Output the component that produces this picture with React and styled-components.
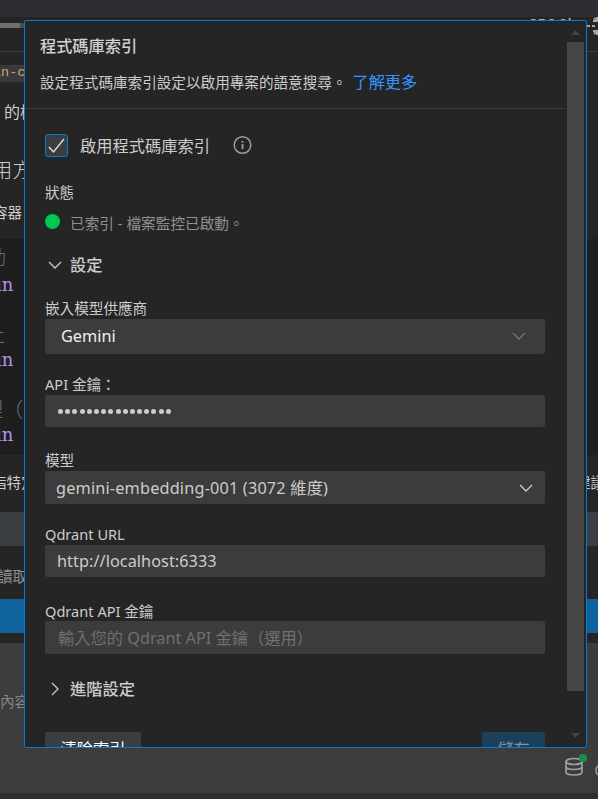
import React from "react";
import styled, { createGlobalStyle } from "styled-components";

const GlobalStyle = createGlobalStyle`
  * { box-sizing: border-box; }
  body { margin: 0; background: #252526; overflow: hidden; }
`;

const sans = `"Noto Sans", "Noto Sans CJK TC", sans-serif`;
const mono = `"DejaVu Sans Mono", "Noto Sans CJK TC", monospace`;

const Screen = styled.div`
  position: relative;
  width: 598px;
  height: 799px;
  overflow: hidden;
  background: #252526;
  color: #cccccc;
  font-family: ${sans};
`;

/* ---------- chat view behind the popover ---------- */

const Chat = styled.div`
  display: flex;
  flex-direction: column;
  height: 100%;
`;

const Strip = styled.div`
  display: flex;
  justify-content: ${(p) => (p.$spread ? "space-between" : "flex-start")};
  align-items: ${(p) => p.$align || "center"};
  flex: none;
  height: ${(p) => p.$h}px;
  background: ${(p) => p.$bg || "transparent"};
  border-bottom: ${(p) => (p.$line ? "1px solid #3c3c3c" : "none")};
`;

const Clip = styled.span`
  flex: none;
  width: ${(p) => p.$w || 24}px;
  margin-left: ${(p) => p.$ml || 0}px;
  overflow: hidden;
  white-space: nowrap;
  font-size: ${(p) => p.$size || 16}px;
  font-weight: ${(p) => p.$weight || 400};
  line-height: ${(p) => p.$lh || 24}px;
  color: ${(p) => p.$color || "#cccccc"};
`;

const InlineCode = styled(Clip)`
  height: 17px;
  background: #3a3a3b;
  color: #c8a56e;
  font-family: "Liberation Mono", monospace;
  line-height: 16px;
`;

const CodeClip = styled(Clip)`
  font-family: ${(p) => (p.$slab ? `"DejaVu Serif", serif` : mono)};
`;

const Progress = styled.div`
  width: 24px;
  height: 5px;
  margin-top: 6px;
  background: linear-gradient(90deg, #707070 20px, #4a4a4a 20px);
`;

const CodeBlock = styled.div`
  display: flex;
  flex-direction: column;
  flex: none;
  height: 216px;
  padding-top: 8px;
  background: #1e1e1e;
`;

const Composer = styled.div`
  display: flex;
  flex-direction: column;
  justify-content: space-between;
  flex: none;
  height: 150px;
  background: #3c3c3c;
`;

const ComposerTools = styled.div`
  display: flex;
  justify-content: flex-end;
  gap: 8px;
  height: 42px;
`;

const IndexButton = styled.div`
  position: relative;
  width: 24px;
  height: 30px;
`;

const ReadyBadge = styled.span`
  position: absolute;
  top: 3px;
  right: 0;
  width: 8px;
  height: 8px;
  border-radius: 50%;
  background: #16914a;
`;

const Footer = styled.div`
  flex: none;
  height: 6px;
  background: #2d2d34;
`;

const HeaderMeta = styled.div`
  display: flex;
  align-items: flex-start;
  margin-top: -4px;
  font-size: 15px;
  font-weight: 500;
  line-height: 20px;
  color: #b4b4b4;
`;

const MetaText = styled.span`
  width: 57px;
  white-space: nowrap;
`;

/* ---------- popover ---------- */

const Popover = styled.section`
  position: absolute;
  left: 24px;
  top: 20px;
  display: flex;
  width: 563px;
  height: 728px;
  border: 1px solid #007fd4;
  border-radius: 2px;
  background: #252526;
  overflow: hidden;
`;

const Scroller = styled.div`
  flex: none;
  width: 540px;
  height: 726px;
  overflow: hidden;
`;

const ScrollTrack = styled.div`
  display: flex;
  flex-direction: column;
  align-items: center;
  width: 21px;
  padding-top: 9px;
`;

const Thumb = styled.div`
  flex: none;
  width: 17px;
  height: 649px;
  margin: 7px 0 42px;
  background: #464647;
`;

const Arrow = styled.svg`
  display: block;
  flex: none;
  width: 9px;
  height: 5px;
  fill: #464647;
`;

const Header = styled.header`
  height: 88px;
  padding: 13px 15px 0;
  border-bottom: 1px solid #3c3c3c;
`;

const Title = styled.h3`
  margin: 0 0 12px;
  font-size: 16.2px;
  font-weight: 500;
  line-height: 24px;
  color: #d2d2d2;
`;

const Description = styled.p`
  display: flex;
  margin: 0;
  font-size: 14.6px;
  line-height: 24px;
  white-space: nowrap;
`;

const Link = styled.a`
  margin-left: 6px;
  font-size: 16.2px;
  color: #3794ff;
`;

const Body = styled.div`
  padding: 25px 20px 0;
`;

const Row = styled.div`
  display: flex;
  align-items: center;
  height: ${(p) => p.$h}px;
  margin-top: ${(p) => p.$mt || 0}px;
`;

const Check = styled.span`
  display: flex;
  align-items: center;
  justify-content: center;
  width: 23px;
  height: 23px;
  margin-right: 12px;
  border: 1px solid #007fd4;
  border-radius: 3px;
  background: #3c3c3c;
`;

const Text = styled.span`
  font-size: ${(p) => p.$size || 16.25}px;
  font-weight: ${(p) => p.$weight || 400};
  letter-spacing: ${(p) => p.$ls || 0}px;
  line-height: 20px;
  color: ${(p) => p.$color || "#cccccc"};
  white-space: pre;
`;

const InfoIcon = styled.svg`
  width: 20px;
  height: 20px;
  margin: -2px 0 0 22px;
`;

const StatusDot = styled.span`
  width: 15px;
  height: 15px;
  margin: -3px 10px 0 0;
  border-radius: 50%;
  background: #00c950;
`;

const Chevron = styled.svg`
  flex: none;
  width: 14px;
  height: 14px;
  fill: none;
  stroke: ${(p) => p.$color || "#cccccc"};
  stroke-width: 1.3;
  transform: rotate(${(p) => p.$turn || 0}deg);
`;

const FoldRow = styled(Row)`
  padding-left: 3px;
  gap: 8px;
`;

const Field = styled.div`
  margin-top: ${(p) => p.$mt}px;
`;

const Label = styled.label`
  display: block;
  height: ${(p) => p.$h || 21}px;
  font-size: 14.6px;
  line-height: 20px;
  white-space: pre;
`;

const Control = styled.div`
  display: flex;
  align-items: center;
  justify-content: space-between;
  height: ${(p) => p.$h}px;
  padding: 0 ${(p) => p.$pr || 12}px ${(p) => p.$pb || 0}px ${(p) => p.$pl || 12}px;
  border-radius: 2px;
  background: #3c3c3c;
`;

const Dots = styled.div`
  display: flex;
  gap: 2.2px;
  margin-left: 1px;
`;

const Dot = styled.span`
  width: 5px;
  height: 5px;
  border-radius: 50%;
  background: #cccccc;
`;

const Actions = styled.div`
  display: flex;
  justify-content: space-between;
  margin-top: 31px;
`;

const Button = styled.button`
  width: ${(p) => p.$w}px;
  height: 34px;
  padding: 0;
  border: 0;
  border-radius: 2px;
  background: ${(p) => (p.$primary ? "#1c405a" : "#3a3d41")};
  color: ${(p) => (p.$primary ? "#87929a" : "#ffffff")};
  font-family: ${sans};
  font-size: 16.25px;
  line-height: 31px;
`;

const DownChevron = ({ color, turn }) => (
  <Chevron viewBox="0 0 14 14" $color={color} $turn={turn}>
    <path d="M1 4l6 6 6-6" />
  </Chevron>
);

function ChatView() {
  return (
    <Chat>
      <Strip $h={17} $bg="#2d2e33" />
      <Strip $h={35} $line $spread $align="flex-start">
        <Progress />
        <HeaderMeta>
          <MetaText>256.0k</MetaText>
          <svg width="12" height="24" viewBox="0 0 12 24" fill="none" stroke="#a8a8a8" strokeWidth="2">
            <path d="M1 13h3M6 13h3M7 8h5M11 4v4M8 5l3 3M7 18h5M8 21l3-3M11 18v4" />
          </svg>
        </HeaderMeta>
      </Strip>
      <Strip $h={43}>
        <InlineCode $ml={-7} $w={31} $size={13.5}>in-c</InlineCode>
      </Strip>
      <Strip $h={36} $align="flex-start">
        <Clip $ml={4} $w={20} $lh={35}>的檔</Clip>
      </Strip>
      <Strip $h={66} $align="flex-start">
        <Clip $ml={-8} $w={32} $size={20.3} $lh={78} $weight={300}>用方</Clip>
      </Strip>
      <Strip $h={42} $align="flex-start">
        <Clip $ml={-7} $w={31} $size={14.6} $lh={30}>容器</Clip>
      </Strip>
      <CodeBlock>
        <Strip $h={25} $align="flex-start"><CodeClip $ml={-14} $w={38} $size={20} $lh={22} $weight={300} $color="#6a737d">動</CodeClip></Strip>
        <Strip $h={25}><CodeClip $slab $ml={-4} $w={28} $size={18} $color="#b392f0">in</CodeClip></Strip>
        <Strip $h={25} />
        <Strip $h={25}><CodeClip $ml={-14} $w={38} $size={19} $weight={300} $color="#6a737d">止</CodeClip></Strip>
        <Strip $h={25}><CodeClip $slab $ml={-4} $w={28} $size={18} $color="#b392f0">in</CodeClip></Strip>
        <Strip $h={25} />
        <Strip $h={25}><CodeClip $ml={-17} $w={41} $size={20} $weight={300} $color="#6a737d">理（</CodeClip></Strip>
        <Strip $h={25}><CodeClip $slab $ml={-4} $w={28} $size={18} $color="#b392f0">in</CodeClip></Strip>
      </CodeBlock>
      <Strip $h={57} $spread $align="flex-start">
        <Clip $ml={-8} $w={32} $size={14.6} $lh={54}>指特定</Clip>
        <Clip $w={22} $size={14.6} $lh={54}>建議</Clip>
      </Strip>
      <Strip $h={34} $bg="#3a3d41" />
      <Strip $h={53} $align="flex-start">
        <Clip $ml={-2} $w={26} $size={14.6} $lh={61} $color="#919191">讀取</Clip>
      </Strip>
      <Strip $h={34} $bg="#0e639c" />
      <Strip $h={10} />
      <Composer>
        <Strip $h={104} $align="flex-start">
          <Clip $size={14.6} $lh={116} $color="#858585">內容</Clip>
        </Strip>
        <ComposerTools>
          <IndexButton>
            <svg width="24" height="30" viewBox="0 0 24 30" fill="none" stroke="#a0a0a0" strokeWidth="1.7">
              <ellipse cx="11" cy="10.500" rx="8" ry="3" />
              <path d="M3 10.500v10.500c0 4 16 4 16 0V10.500M3 15.500c0 4 16 4 16 0" />
            </svg>
            <ReadyBadge />
          </IndexButton>
          <svg width="3" height="32" viewBox="0 0 3 32" fill="none" stroke="#a0a0a0" strokeWidth="1.4">
            <path d="M4 15c-4 1-4 8 0 9" />
          </svg>
        </ComposerTools>
      </Composer>
      <Footer />
    </Chat>
  );
}

export default function App() {
  return (
    <Screen>
      <GlobalStyle />
      <ChatView />
      <Popover>
        <Scroller>
          <Header>
            <Title>程式碼庫索引</Title>
            <Description>
              設定程式碼庫索引設定以啟用專案的語意搜尋。<Link>了解更多</Link>
            </Description>
          </Header>
          <Body>
            <Row $h={23}>
              <Check>
                <svg width="17" height="17" viewBox="0 0 17 17" fill="none" stroke="#dddddd" strokeWidth="1.4">
                  <path d="M1 10l4.500 5L16 2" />
                </svg>
              </Check>
              <Text>啟用程式碼庫索引</Text>
              <InfoIcon viewBox="0 0 20 20" fill="none" stroke="#9d9d9d">
                <circle cx="10.500" cy="10" r="8.300" strokeWidth="1.500" />
                <path d="M10.500 9v5M10.500 6v1.800" strokeWidth="1.800" />
              </InfoIcon>
            </Row>
            <Row $h={20} $mt={25}>
              <Text $size={14.6}>狀態</Text>
            </Row>
            <Row $h={20} $mt={11}>
              <StatusDot />
              <Text $size={14.6} $ls={0.06} $color="#919191">已索引 - 檔案監控已啟動。</Text>
            </Row>
            <FoldRow $h={24} $mt={20}>
              <DownChevron />
              <Text $weight={500}>設定</Text>
            </FoldRow>
            <Field $mt={21}>
              <Label>嵌入模型供應商</Label>
              <Control $h={35} $pl={16} $pr={19} $pb={2}>
                <Text $color="#f0f0f0">Gemini</Text>
                <DownChevron color="#777777" />
              </Control>
            </Field>
            <Field $mt={20}>
              <Label>API 金鑰：</Label>
              <Control $h={32}>
                <Dots>
                  {Array.from({ length: 16 }, (_, i) => <Dot key={i} />)}
                </Dots>
              </Control>
            </Field>
            <Field $mt={23}>
              <Label>模型</Label>
              <Control $h={33} $pl={11}>
                <Text $ls={0.18}>gemini-embedding-001 (3072 維度)</Text>
                <DownChevron />
              </Control>
            </Field>
            <Field $mt={20}>
              <Label>Qdrant URL</Label>
              <Control $h={32}>
                <Text $ls={0.06}>http://localhost:6333</Text>
              </Control>
            </Field>
            <Field $mt={24}>
              <Label $h={20}>Qdrant API 金鑰</Label>
              <Control $h={33} $pl={13}>
                <Text $color="#707070">輸入您的 Qdrant API 金鑰（選用）</Text>
              </Control>
            </Field>
            <FoldRow $h={24} $mt={23}>
              <DownChevron turn={-90} />
              <Text $weight={500}>進階設定</Text>
            </FoldRow>
            <Actions>
              <Button $w={96}>清除索引</Button>
              <Button $w={63} $primary>儲存</Button>
            </Actions>
          </Body>
        </Scroller>
        <ScrollTrack>
          <Arrow viewBox="0 0 9 5"><path d="M0 5L4.500 0L9 5z" /></Arrow>
          <Thumb />
          <Arrow viewBox="0 0 9 5"><path d="M0 0h9L4.500 5z" /></Arrow>
        </ScrollTrack>
      </Popover>
    </Screen>
  );
}
